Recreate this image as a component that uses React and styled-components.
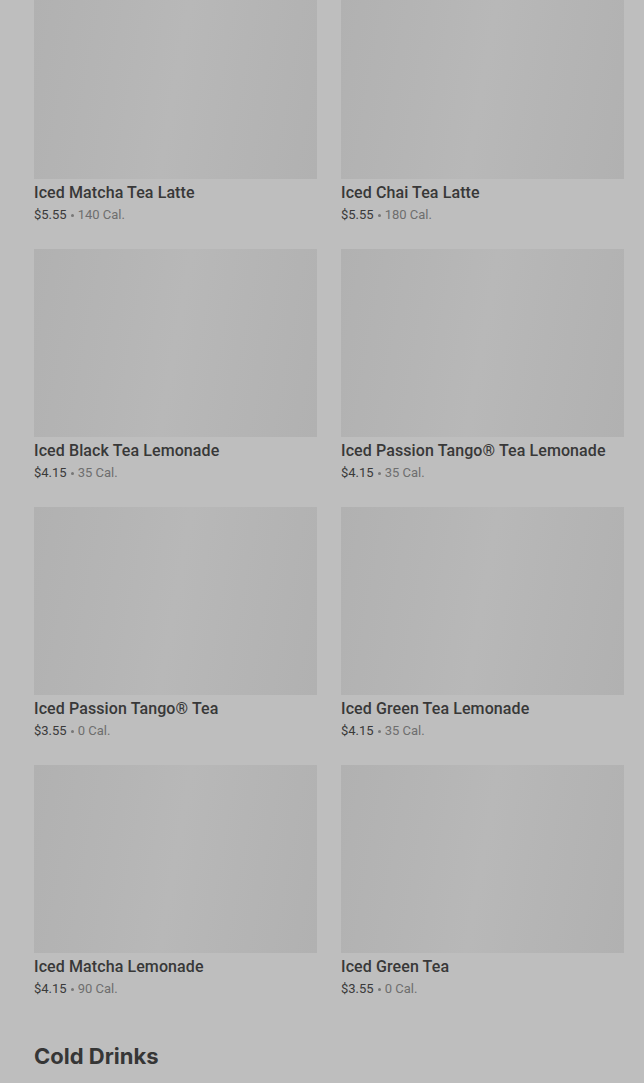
import React from 'react';
import styled, { createGlobalStyle } from 'styled-components';

const GlobalStyle = createGlobalStyle`
  html, body {
    margin: 0;
    padding: 0;
    background: #bebebe;
    overflow: hidden;
  }
  body {
    font-family: Roboto, Inter, "Noto Sans", sans-serif;
    -webkit-font-smoothing: antialiased;
  }
`;

const drinks = [
  { name: 'Iced Matcha Tea Latte', price: '$5.55', cal: '140 Cal.' },
  { name: 'Iced Chai Tea Latte', price: '$5.55', cal: '180 Cal.' },
  { name: 'Iced Black Tea Lemonade', price: '$4.15', cal: '35 Cal.' },
  { name: 'Iced Passion Tango® Tea Lemonade', price: '$4.15', cal: '35 Cal.' },
  { name: 'Iced Passion Tango® Tea', price: '$3.55', cal: '0 Cal.' },
  { name: 'Iced Green Tea Lemonade', price: '$4.15', cal: '35 Cal.' },
  { name: 'Iced Matcha Lemonade', price: '$4.15', cal: '90 Cal.' },
  { name: 'Iced Green Tea', price: '$3.55', cal: '0 Cal.' },
];

const Page = styled.main`
  margin-top: -9px;
  padding: 0 20px 0 34px;
`;

const Grid = styled.ul`
  list-style: none;
  margin: 0;
  padding: 0;
  display: grid;
  grid-template-columns: 283px 283px;
  column-gap: 24px;
  row-gap: 25px;
`;

const Card = styled.li`
  display: flex;
  flex-direction: column;
`;

const Thumb = styled.div`
  height: 188px;
  background: linear-gradient(
    100deg,
    #b1b1b1 0%,
    #b5b5b5 30%,
    #b8b8b8 50%,
    #b5b5b5 70%,
    #b1b1b1 100%
  );
`;

const Name = styled.h3`
  margin: 4px 0 0;
  font-size: 16px;
  line-height: 20px;
  font-weight: 500;
  color: #383838;
  letter-spacing: 0.1px;
`;

const Meta = styled.p`
  margin: 3px 0 0;
  height: 18px;
  display: flex;
  align-items: center;
  font-size: 13px;
  line-height: 18px;
  color: #6e6e6e;
`;

const Price = styled.span`
  color: #3a3a3a;
`;

const Dot = styled.span`
  width: 3px;
  height: 3px;
  border-radius: 50%;
  background: #777;
  margin: 1px 4px 0;
`;

const Heading = styled.h2`
  margin: 44px 0 0;
  font-family: Inter, "Noto Sans", sans-serif;
  font-size: 22px;
  line-height: 28px;
  font-weight: 700;
  letter-spacing: 0;
  color: #363636;
`;

export default function App() {
  return (
    <>
      <GlobalStyle />
      <Page>
        <Grid>
          {drinks.map((d) => (
            <Card key={d.name}>
              <Thumb />
              <Name>{d.name}</Name>
              <Meta>
                <Price>{d.price}</Price>
                <Dot />
                {d.cal}
              </Meta>
            </Card>
          ))}
        </Grid>
        <Heading>Cold Drinks</Heading>
      </Page>
    </>
  );
}
